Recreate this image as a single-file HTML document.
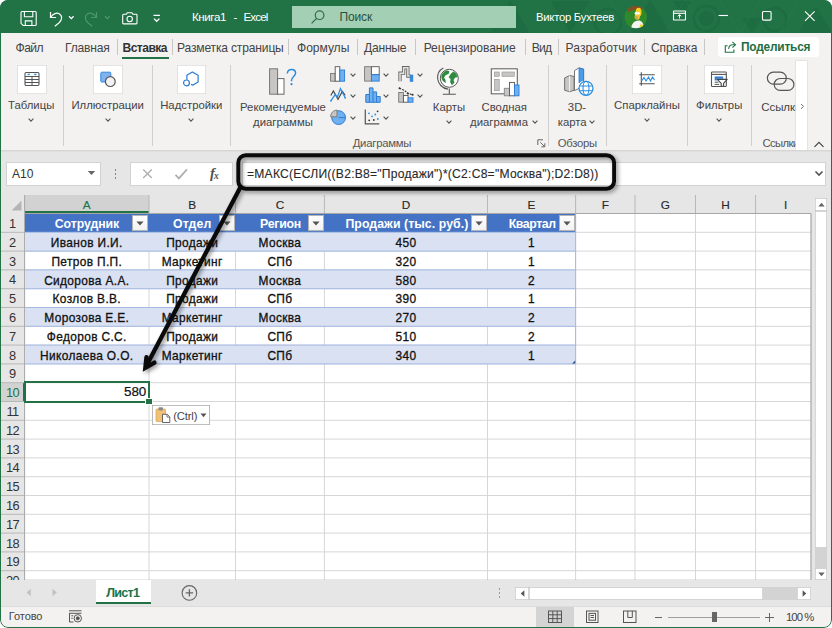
<!DOCTYPE html>
<html lang="ru"><head><meta charset="utf-8"><title>Excel</title>
<style>
html,body{margin:0;padding:0;background:#fff;}
body{width:832px;height:628px;position:relative;overflow:hidden;font-family:"Liberation Sans",sans-serif;}
.b{position:absolute;display:block;}
.t{position:absolute;white-space:nowrap;display:block;line-height:0;}
.s{display:inline-block;width:0;height:30px;}
</style></head><body>
<div class="b" style="left:0.00px;top:0.00px;width:832.00px;height:628.00px;background:#fff;"></div>
<div class="b" id="win" style="left:0;top:0;width:832px;height:628px;border-radius:8px;overflow:hidden;background:#e6e6e6">
<div class="b" style="left:0.00px;top:0.00px;width:832.00px;height:32.50px;background:#217346;"></div>
<svg class="b" style="left:480px;top:0" width="352" height="33" viewBox="0 0 352 33">
<g fill="#1e6c41">
<polygon points="10,33 30,0 50,33"/><polygon points="70,0 110,0 90,33"/><polygon points="150,33 170,0 190,33"/>
<polygon points="262,18 282,18 272,33"/><polygon points="318,33 336,6 352,33"/><polygon points="192,0 212,0 202,14"/>
<circle cx="226.500" cy="18.500" r="7.500"/>
</g>
<g fill="none" stroke="#1e6c41" stroke-width="2.500"><circle cx="226.500" cy="18.500" r="12.500"/><circle cx="294.700" cy="19.600" r="11.500"/><circle cx="128" cy="22" r="13"/></g>
<g fill="none" stroke="#2a7c50" stroke-width=".8" opacity=".7"><path d="M185 33l20-33 20 33M240 0l20 33 20-33M300 33l18-33M130 0l20 33"/></g>
</svg>
<div class="b" style="left:292.00px;top:6.00px;width:223.50px;height:22.00px;background:#a3cfb5;"></div>
<svg class="b" style="left:310px;top:9px" width="16" height="16" viewBox="0 0 16 16"><circle cx="9.6" cy="6.2" r="4.3" fill="none" stroke="#2f6f4c" stroke-width="1.2"/><path d="M6.6 9.4 L1.6 14.4" stroke="#2f6f4c" stroke-width="1.3" fill="none"/></svg>
<span class="t" style="left:339.50px;top:-9.10px;font-size:12px;color:#2b4f3b;font-weight:400;letter-spacing:-0.150px;"><i class="s"></i>Поиск</span>
<span class="t" style="left:192.00px;top:-9.20px;font-size:11.6px;color:#fff;font-weight:400;letter-spacing:-0.420px;"><i class="s"></i>Книга1</span>
<span class="t" style="left:233.50px;top:-9.20px;font-size:11.6px;color:#fff;font-weight:400;letter-spacing:0.137px;"><i class="s"></i>-</span>
<span class="t" style="left:243.50px;top:-9.20px;font-size:11.6px;color:#fff;font-weight:400;letter-spacing:-0.873px;"><i class="s"></i>Excel</span>
<span class="t" style="left:536.00px;top:-8.90px;font-size:11.3px;color:#fff;font-weight:400;letter-spacing:-0.260px;"><i class="s"></i>Виктор Бухтеев</span>
<svg class="b" style="left:624px;top:5px" width="24" height="24" viewBox="0 0 24 24">
<defs><clipPath id="av"><circle cx="11.800" cy="12.100" r="11.200"/></clipPath></defs>
<g clip-path="url(#av)"><rect width="24" height="24" fill="#2f8a2c"/>
<path d="M0 0h24v5.500c-4-2.200-14-2.200-20 1.500z" fill="#8a4b23"/>
<ellipse cx="14.600" cy="7.200" rx="2.900" ry="4.400" fill="#f6d11f"/>
<ellipse cx="13.300" cy="11.800" rx="2.600" ry="3" fill="#f0c62a"/>
<ellipse cx="12.300" cy="12.600" rx="1.800" ry="1.500" fill="#c9a45c"/>
<circle cx="12.200" cy="8.300" r="1.500" fill="#fff"/><circle cx="14.600" cy="8.200" r="1.300" fill="#fff"/>
<path d="M7 24c.5-5 3-8.500 7.500-8.500 3 0 5 2.500 5.200 6.500l-2 2z" fill="#f4f4f2"/>
<circle cx="17.500" cy="21" r="1.800" fill="#f6d11f"/>
</g></svg>
<svg class="b" style="left:660px;top:0" width="172" height="33" viewBox="0 0 172 33" fill="none" stroke="#fff" stroke-width="1.1">
<rect x="13.5" y="11" width="12" height="9" rx="0.5"/><path d="M13.5 13.3h12"/><path d="M19.5 18.5v-3.6M17.7 16.3l1.8-1.6 1.8 1.6" stroke-width="1"/>
<path d="M58.5 15.5h9.5"/>
<rect x="102.5" y="11.5" width="8.6" height="8.6" rx="1"/>
<path d="M145 11.3l9.6 9.6M154.6 11.3l-9.6 9.6"/>
</svg>
<svg class="b" style="left:16.500px;top:6.500px" width="150" height="22" viewBox="0 0 150 22" fill="none" stroke="#fff" stroke-width="1.1">
<path d="M5 4.5h13.2a1 1 0 0 1 1 1v12a1 1 0 0 1-1 1H6.2L4 16.3V5.5a1 1 0 0 1 1-1z"/>
<path d="M7.4 4.5v5.2h8.4V4.5M8.3 18.5v-4.6h6.6v4.6"/>
<path d="M33.5 5v5.5h5.5" stroke-width="1.2"/><path d="M33.8 10.3c2-3.6 6-5.2 8.8-3.2 3 2.200 2.400 6-0.500 8.600l-4.300 3.600" stroke-width="1.2"/>
<path d="M52 9.300l2.300 2.300 2.300-2.300" stroke-width="1.3"/>
<g stroke="#4f9470"><path d="M79.500 5v5.500h-5.500" stroke-width="1.200"/><path d="M79.200 10.300c-2-3.600-6-5.200-8.800-3.200-3 2.200-2.400 6 .5 8.600l4.300 3.600" stroke-width="1.2"/><path d="M88 9.300l2.300 2.300 2.300-2.300" stroke-width="1.300"/></g>
<path d="M106.500 7.300h2.800l1-1.600h4.600l1 1.600h3.300a.8.800 0 0 1 .8.800v8a.8.800 0 0 1-.8.800h-12.700a.8.800 0 0 1-.8-.8v-8a.8.800 0 0 1 .8-.8z"/><circle cx="112.700" cy="12" r="2.700"/>
<path d="M136.500 8.400h6.400" stroke-width="1.200"/><path d="M137 11.600l2.700 2.700 2.700-2.700" stroke-width="1.300"/>
</svg>
<div class="b" style="left:0.00px;top:32.50px;width:832.00px;height:117.50px;background:#f3f2f1;"></div>
<span class="t" style="left:15.50px;top:22.00px;font-size:12.1px;color:#444;font-weight:400;letter-spacing:-0.562px;"><i class="s"></i>Файл</span>
<span class="t" style="left:65.00px;top:22.00px;font-size:12.1px;color:#444;font-weight:400;letter-spacing:-0.222px;"><i class="s"></i>Главная</span>
<span class="t" style="left:122.50px;top:22.00px;font-size:12.1px;color:#333;font-weight:700;letter-spacing:-0.550px;"><i class="s"></i>Вставка</span>
<span class="t" style="left:177.00px;top:22.00px;font-size:12.1px;color:#444;font-weight:400;letter-spacing:-0.181px;"><i class="s"></i>Разметка страницы</span>
<span class="t" style="left:297.00px;top:22.00px;font-size:12.1px;color:#444;font-weight:400;letter-spacing:-0.051px;"><i class="s"></i>Формулы</span>
<span class="t" style="left:364.00px;top:22.00px;font-size:12.1px;color:#444;font-weight:400;letter-spacing:-0.236px;"><i class="s"></i>Данные</span>
<span class="t" style="left:423.70px;top:22.00px;font-size:12.1px;color:#444;font-weight:400;letter-spacing:-0.102px;"><i class="s"></i>Рецензирование</span>
<span class="t" style="left:531.70px;top:22.00px;font-size:12.1px;color:#444;font-weight:400;letter-spacing:-0.797px;"><i class="s"></i>Вид</span>
<span class="t" style="left:565.50px;top:22.00px;font-size:12.1px;color:#444;font-weight:400;letter-spacing:0.085px;"><i class="s"></i>Разработчик</span>
<span class="t" style="left:651.00px;top:22.00px;font-size:12.1px;color:#444;font-weight:400;letter-spacing:-0.167px;"><i class="s"></i>Справка</span>
<div class="b" style="left:116.50px;top:39.00px;width:1.00px;height:15.50px;background:#c8c6c4;"></div>
<div class="b" style="left:172.20px;top:39.00px;width:1.00px;height:15.50px;background:#c8c6c4;"></div>
<div class="b" style="left:288.20px;top:39.00px;width:1.00px;height:15.50px;background:#c8c6c4;"></div>
<div class="b" style="left:357.00px;top:39.00px;width:1.00px;height:15.50px;background:#c8c6c4;"></div>
<div class="b" style="left:415.00px;top:39.00px;width:1.00px;height:15.50px;background:#c8c6c4;"></div>
<div class="b" style="left:524.50px;top:39.00px;width:1.00px;height:15.50px;background:#c8c6c4;"></div>
<div class="b" style="left:557.80px;top:39.00px;width:1.00px;height:15.50px;background:#c8c6c4;"></div>
<div class="b" style="left:644.00px;top:39.00px;width:1.00px;height:15.50px;background:#c8c6c4;"></div>
<div class="b" style="left:704.00px;top:39.00px;width:1.00px;height:15.50px;background:#c8c6c4;"></div>
<div class="b" style="left:122.00px;top:57.00px;width:47.00px;height:2.30px;background:#217346;"></div>
<div class="b" style="left:718.00px;top:36.60px;width:101.00px;height:20.10px;background:#fff;border-radius:3px;"></div>
<svg class="b" style="left:723px;top:39px" width="16" height="16" viewBox="0 0 16 16" fill="none" stroke="#217346" stroke-width="1.1">
<path d="M4.600 6.800H2.300v6.400h8.600V10.400"/><path d="M9.400 2.800l3.100 2.900-3.100 2.900"/><path d="M12.300 5.700H9.600c-2.300 0-3.900 1.600-3.900 4.300"/></svg>
<span class="t" style="left:741.00px;top:21.20px;font-size:11.9px;color:#1e6e42;font-weight:700;letter-spacing:-0.202px;"><i class="s"></i>Поделиться</span>
<div class="b" style="left:63.00px;top:65.00px;width:1.00px;height:81.00px;background:#d2d0ce;"></div>
<div class="b" style="left:152.40px;top:65.00px;width:1.00px;height:81.00px;background:#d2d0ce;"></div>
<div class="b" style="left:229.90px;top:65.00px;width:1.00px;height:81.00px;background:#d2d0ce;"></div>
<div class="b" style="left:547.50px;top:65.00px;width:1.00px;height:81.00px;background:#d2d0ce;"></div>
<div class="b" style="left:606.00px;top:65.00px;width:1.00px;height:81.00px;background:#d2d0ce;"></div>
<div class="b" style="left:687.00px;top:65.00px;width:1.00px;height:81.00px;background:#d2d0ce;"></div>
<div class="b" style="left:750.50px;top:65.00px;width:1.00px;height:81.00px;background:#d2d0ce;"></div>
<div class="b" style="left:17.00px;top:65.00px;width:29.60px;height:28.60px;background:#fff;box-shadow:inset 0 0 0 0.8px #dddbd9;"></div>
<svg class="b" style="left:23.90px;top:70.500px;overflow:visible" width="16" height="16" viewBox="0 0 16 16" fill="none"><rect x="1" y="1.500" width="14" height="13" rx="1.200" stroke="#555" stroke-width="1.100"/><path d="M1 5.500h14M1 8.500h14M1 11.500h14M8 5.500v9" stroke="#555" stroke-width="1"/><path d="M3.500 3l1.200 1.200L5.900 3zM10.100 3l1.200 1.200L12.500 3z" fill="#1e8fe6" stroke="#1e8fe6" stroke-width=".5"/></svg>
<span class="t" style="left:8.03px;top:79.00px;font-size:11.35px;color:#444;font-weight:400;letter-spacing:0.000px;"><i class="s"></i>Таблицы</span>
<svg class="b" style="left:27.20px;top:116.50px" width="8" height="6" viewBox="0 0 8 6"><path d="M1.600 1.700L4 4.100 6.400 1.700" fill="none" stroke="#555" stroke-width="1.150"/></svg>
<div class="b" style="left:93.20px;top:65.00px;width:29.60px;height:28.60px;background:#fff;box-shadow:inset 0 0 0 0.8px #dddbd9;"></div>
<svg class="b" style="left:100.10px;top:70.500px;overflow:visible" width="16" height="16" viewBox="0 0 16 16" fill="none"><rect x=".8" y="1.200" width="10" height="9.800" rx="1" fill="#7db3ee" stroke="#3a86da" stroke-width="1"/><circle cx="10.300" cy="10.600" r="4.900" fill="#f3f3f3" stroke="#555" stroke-width="1.200"/></svg>
<span class="t" style="left:71.40px;top:79.00px;font-size:11.35px;color:#444;font-weight:400;letter-spacing:0.000px;"><i class="s"></i>Иллюстрации</span>
<svg class="b" style="left:103.70px;top:116.50px" width="8" height="6" viewBox="0 0 8 6"><path d="M1.600 1.700L4 4.100 6.400 1.700" fill="none" stroke="#555" stroke-width="1.150"/></svg>
<div class="b" style="left:176.50px;top:65.00px;width:29.60px;height:28.60px;background:#fff;box-shadow:inset 0 0 0 0.8px #dddbd9;"></div>
<svg class="b" style="left:183.40px;top:70.500px;overflow:visible" width="16" height="16" viewBox="0 0 16 16" fill="none"><path d="M3.900 8.800V4.300L9.300 .900 15.100 4.300V11L10.100 14.100 8 13.400" stroke="#2b7cd3" stroke-width="1.200" stroke-linejoin="round"/><circle cx="3.500" cy="11.900" r="2.900" stroke="#2b7cd3" stroke-width="1.200"/></svg>
<span class="t" style="left:160.16px;top:79.00px;font-size:11.35px;color:#444;font-weight:400;letter-spacing:0.000px;"><i class="s"></i>Надстройки</span>
<svg class="b" style="left:187.30px;top:116.50px" width="8" height="6" viewBox="0 0 8 6"><path d="M1.600 1.700L4 4.100 6.400 1.700" fill="none" stroke="#555" stroke-width="1.150"/></svg>
<div class="b" style="left:632.30px;top:65.00px;width:29.60px;height:28.60px;background:#fff;box-shadow:inset 0 0 0 0.8px #dddbd9;"></div>
<svg class="b" style="left:639.20px;top:70.500px;overflow:visible" width="16" height="16" viewBox="0 0 16 16" fill="none"><path d="M2.300 1.300v13.500M.2 3.800h15.600M.2 12.700h15.600" stroke="#555" stroke-width="1.100"/><path d="M3 9.500l2-3 2 3.500 2.500-4 2 4 2-4 2 3" stroke="#2b8de0" stroke-width="1.100"/></svg>
<span class="t" style="left:614.12px;top:79.00px;font-size:11.35px;color:#444;font-weight:400;letter-spacing:0.000px;"><i class="s"></i>Спарклайны</span>
<svg class="b" style="left:643.00px;top:116.50px" width="8" height="6" viewBox="0 0 8 6"><path d="M1.600 1.700L4 4.100 6.400 1.700" fill="none" stroke="#555" stroke-width="1.150"/></svg>
<div class="b" style="left:704.40px;top:65.00px;width:29.60px;height:28.60px;background:#fff;box-shadow:inset 0 0 0 0.8px #dddbd9;"></div>
<svg class="b" style="left:711.30px;top:70.500px;overflow:visible" width="16" height="16" viewBox="0 0 16 16" fill="none"><rect x=".5" y="1" width="14.800" height="14.500" rx=".8" stroke="#555" stroke-width="1.100"/><path d=".5 3.400" /><path d="M.5 3.400h14.800" stroke="#555" stroke-width="1.100"/><path d="M3.700 5.500h8.500v2.200H5.700v1.800h-2z" fill="#2b7cd3"/><path d="M3.700 11.200h3.600M3.700 13.400h4.500" stroke="#555" stroke-width="1"/><path d="M6.200 8.400h10l-3.600 4v2.800h-2.400v-2.800z" fill="#fff" stroke="#444" stroke-width="1.100" stroke-linejoin="round"/></svg>
<span class="t" style="left:696.06px;top:79.00px;font-size:11.35px;color:#444;font-weight:400;letter-spacing:0.000px;"><i class="s"></i>Фильтры</span>
<svg class="b" style="left:715.20px;top:116.50px" width="8" height="6" viewBox="0 0 8 6"><path d="M1.600 1.700L4 4.100 6.400 1.700" fill="none" stroke="#555" stroke-width="1.150"/></svg>
<svg class="b" style="left:268px;top:66px" width="32" height="32" viewBox="0 0 32 32" fill="none">
<rect x="1.600" y="2.800" width="8" height="25.400" fill="#c8c6c4" stroke="#777" stroke-width="1"/>
<rect x="9.600" y="12.600" width="6.400" height="15.600" fill="#fff" stroke="#666" stroke-width="1"/>
<path d="M19.300 7.500c.2-2.700 2-4.100 4.200-4.100 2.400 0 4.100 1.500 4.100 3.700 0 3.200-4.100 3.700-4.100 7.300v.8" stroke="#2b8de0" stroke-width="1.500"/><circle cx="23.500" cy="18.200" r="1.100" fill="#2b8de0"/></svg>
<span class="t" style="left:240.04px;top:81.20px;font-size:11.35px;color:#444;font-weight:400;letter-spacing:0.000px;"><i class="s"></i>Рекомендуемые</span>
<span class="t" style="left:253.10px;top:95.70px;font-size:11.35px;color:#444;font-weight:400;letter-spacing:0.000px;"><i class="s"></i>диаграммы</span>
<svg class="b" style="left:330.30px;top:66.40px" width="16" height="16" viewBox="0 0 16 16" fill="none"><rect x=".6" y="7.500" width="4.600" height="7.700" fill="#c8c6c4" stroke="#777" stroke-width=".9"/><rect x="5.200" y=".700" width="4.600" height="14.500" fill="#fff" stroke="#555" stroke-width=".9"/><rect x="9.800" y="4" width="4.800" height="11.200" fill="#6fb1f0" stroke="#2b7cd3" stroke-width=".9"/></svg>
<svg class="b" style="left:364.00px;top:66.40px" width="16" height="16" viewBox="0 0 16 16" fill="none"><rect x=".6" y=".700" width="6.800" height="14.400" fill="#c8c6c4" stroke="#777" stroke-width=".9"/><rect x="7.400" y=".700" width="7.800" height="8" fill="#fff" stroke="#555" stroke-width=".9"/><rect x="7.400" y="8.700" width="7.800" height="6.400" fill="#6fb1f0" stroke="#2b7cd3" stroke-width=".9"/></svg>
<svg class="b" style="left:397.80px;top:66.40px" width="16" height="16" viewBox="0 0 16 16" fill="none"><path d="M2 15.200V7.200H5.600V1.700H9.900V10.100H12.600" stroke="#666" stroke-width="3.300"/><path d="M2 15.800V7.200H5.600V1.700H9.900V10.100H12.600" stroke="#e4e4e4" stroke-width="1.500"/><rect x="12.200" y="9.100" width="2.600" height="6.200" fill="#2b8de0" stroke="#2b7cd3" stroke-width=".8"/></svg>
<svg class="b" style="left:330.30px;top:87.30px" width="16" height="16" viewBox="0 0 16 16" fill="none"><path d="M.8 8.600L3.400 4 8 12.300 12.300 4.400 15.200 8.400" stroke="#444" stroke-width="1.100"/><path d="M.8 13.800L5.200 7.600 7.400 10.200 10.400 1.600 15.200 10.800" stroke="#2b8de0" stroke-width="1.200"/><g fill="#2b8de0"><circle cx=".9" cy="13.800" r=".9"/><circle cx="15.200" cy="10.800" r=".9"/></g></svg>
<svg class="b" style="left:364.60px;top:87.30px" width="16" height="16" viewBox="0 0 16 16" fill="none"><path d="M.8 15.300V7.500h3.600V.9h3.600v4h3.600v4.600h3.600v5.800z" fill="#6fb1f0" stroke="#2b7cd3" stroke-width="1"/><path d="M4.400 7.500v7.800M8 4.900v10.400M11.600 9.500v5.800" stroke="#2b7cd3" stroke-width="1"/></svg>
<svg class="b" style="left:397.80px;top:87.30px" width="16" height="16" viewBox="0 0 16 16" fill="none"><rect x=".7" y="5.500" width="4.700" height="9.700" fill="#c8c6c4" stroke="#777" stroke-width=".9"/><rect x="5.400" y="8.500" width="4.700" height="6.700" fill="#fff" stroke="#555" stroke-width=".9"/><rect x="10.100" y="10.800" width="4.900" height="4.400" fill="#6fb1f0" stroke="#2b7cd3" stroke-width=".9"/><path d="M1.400 1.200l5 2.200 3.400 3 5 1.300" stroke="#333" stroke-width="1.100" stroke-dasharray="2 1"/><g fill="#333"><circle cx="1.500" cy="1.300" r="1"/><circle cx="9.800" cy="6.400" r="1"/><circle cx="14.600" cy="7.700" r="1"/></g></svg>
<svg class="b" style="left:330.30px;top:108.90px" width="16" height="16" viewBox="0 0 16 16" fill="none"><circle cx="8.600" cy="8.600" r="6.900" fill="#6fb1f0" stroke="#2b7cd3" stroke-width="1"/><path d="M7 1v6.800H.6A6.600 6.600 0 0 1 7 1z" fill="#c8c6c4" stroke="#777" stroke-width=".9"/><path d="M8.600 8.600H15.400" stroke="#2b7cd3" stroke-width=".9"/></svg>
<svg class="b" style="left:364.00px;top:108.90px" width="16" height="16" viewBox="0 0 16 16" fill="none"><path d="M1.300.6v14.200h14" stroke="#555" stroke-width="1.200"/><g fill="#2b8de0"><circle cx="5" cy="4.300" r=".9"/><circle cx="8" cy="7.300" r=".9"/><circle cx="11.300" cy="5.500" r=".9"/><circle cx="13.800" cy="10" r=".9"/></g><g fill="#333"><circle cx="13.600" cy="2.300" r=".9"/><circle cx="5.200" cy="11.300" r=".9"/><circle cx="9.800" cy="11" r=".9"/></g></svg>
<svg class="b" style="left:348.50px;top:71.50px" width="8" height="6" viewBox="0 0 8 6"><path d="M1.600 1.700L4 4.100 6.400 1.700" fill="none" stroke="#555" stroke-width="1.150"/></svg>
<svg class="b" style="left:348.50px;top:93.30px" width="8" height="6" viewBox="0 0 8 6"><path d="M1.600 1.700L4 4.100 6.400 1.700" fill="none" stroke="#555" stroke-width="1.150"/></svg>
<svg class="b" style="left:382.30px;top:71.50px" width="8" height="6" viewBox="0 0 8 6"><path d="M1.600 1.700L4 4.100 6.400 1.700" fill="none" stroke="#555" stroke-width="1.150"/></svg>
<svg class="b" style="left:382.30px;top:93.30px" width="8" height="6" viewBox="0 0 8 6"><path d="M1.600 1.700L4 4.100 6.400 1.700" fill="none" stroke="#555" stroke-width="1.150"/></svg>
<svg class="b" style="left:416.30px;top:71.50px" width="8" height="6" viewBox="0 0 8 6"><path d="M1.600 1.700L4 4.100 6.400 1.700" fill="none" stroke="#555" stroke-width="1.150"/></svg>
<svg class="b" style="left:416.30px;top:93.30px" width="8" height="6" viewBox="0 0 8 6"><path d="M1.600 1.700L4 4.100 6.400 1.700" fill="none" stroke="#555" stroke-width="1.150"/></svg>
<svg class="b" style="left:348.50px;top:114.60px" width="8" height="6" viewBox="0 0 8 6"><path d="M1.600 1.700L4 4.100 6.400 1.700" fill="none" stroke="#555" stroke-width="1.150"/></svg>
<svg class="b" style="left:382.30px;top:114.60px" width="8" height="6" viewBox="0 0 8 6"><path d="M1.600 1.700L4 4.100 6.400 1.700" fill="none" stroke="#555" stroke-width="1.150"/></svg>
<span class="t" style="left:352.70px;top:117.00px;font-size:11.3px;color:#555;font-weight:400;letter-spacing:-0.222px;"><i class="s"></i>Диаграммы</span>
<svg class="b" style="left:435px;top:66px" width="28" height="31" viewBox="0 0 28 31" fill="none">
<circle cx="14.300" cy="12.300" r="9" fill="#fff" stroke="#555" stroke-width="1"/>
<path d="M9.500 5.500c2-1.500 4-1 5 0l-1 2.500-3 1.200-1.500 2.500 1.500 2 .3 3.200c-2.500-.8-4.300-3.500-4.500-6 0-2 1.500-4 3.200-5.400zM16 7.500l2.500-2 3 2.300.8 3.400-2 .2-1.800 2.600 1 2.500-2.600 2.800-1.800-3.300.5-3-2-1.800z" fill="#2e8b3e"/>
<path d="M8.300 1.900C4.500 4 2.300 8 2.600 12.300c.4 5.500 4.600 10.100 10.400 10.800" stroke="#555" stroke-width="1.100"/>
<path d="M14.300 22.500v5.500M7.800 28.300h13" stroke="#555" stroke-width="1.100"/></svg>
<span class="t" style="left:432.83px;top:81.20px;font-size:11.35px;color:#444;font-weight:400;letter-spacing:0.000px;"><i class="s"></i>Карты</span>
<svg class="b" style="left:444.70px;top:118.50px" width="8" height="6" viewBox="0 0 8 6"><path d="M1.600 1.700L4 4.100 6.400 1.700" fill="none" stroke="#555" stroke-width="1.150"/></svg>
<svg class="b" style="left:489px;top:66px" width="33" height="32" viewBox="0 0 33 32" fill="none">
<rect x="2.300" y="2.800" width="26" height="25" fill="#fff" stroke="#666" stroke-width="1.100"/>
<rect x="5.600" y="6" width="4.600" height="4.300" fill="#c8c6c4" stroke="#999" stroke-width=".7"/><rect x="13" y="6" width="12.300" height="4.300" fill="#c8c6c4" stroke="#999" stroke-width=".7"/>
<rect x="5.600" y="13.300" width="4.600" height="11.400" fill="#c8c6c4" stroke="#999" stroke-width=".7"/>
<rect x="15.300" y="22.300" width="5.200" height="7.500" fill="#c8c6c4" stroke="#888" stroke-width=".9"/><rect x="20.500" y="16.400" width="5" height="13.400" fill="#fff" stroke="#555" stroke-width=".9"/><rect x="25.500" y="19" width="4.500" height="10.800" fill="#6fb1f0" stroke="#2b7cd3" stroke-width=".9"/></svg>
<span class="t" style="left:481.54px;top:81.20px;font-size:11.35px;color:#444;font-weight:400;letter-spacing:0.000px;"><i class="s"></i>Сводная</span>
<span class="t" style="left:470.02px;top:95.70px;font-size:11.35px;color:#444;font-weight:400;letter-spacing:0.000px;"><i class="s"></i>диаграмма</span>
<svg class="b" style="left:530.50px;top:119.00px" width="8" height="6" viewBox="0 0 8 6"><path d="M1.600 1.700L4 4.100 6.400 1.700" fill="none" stroke="#555" stroke-width="1.150"/></svg>
<svg class="b" style="left:537px;top:139px" width="9" height="9" viewBox="0 0 9 9" fill="none" stroke="#666" stroke-width="1"><path d="M.8 6V.8H6"/><path d="M3.300 3.300L7.600 7.600M7.800 4.300v3.500H4.300"/></svg>
<svg class="b" style="left:562px;top:66px" width="33" height="32" viewBox="0 0 33 32" fill="none">
<path d="M2.600 12l5-2.500 4.500 1v13.800l-4.500 1.400-5-1.400z" fill="#c8c6c4" stroke="#666" stroke-width=".9"/><path d="M7.600 9.600v16" stroke="#fff" stroke-width=".8"/>
<path d="M12.500 4.600l4.500-2.800 4.600 1.300v17l-9.100 4.500z" fill="#fff" stroke="#666" stroke-width=".9"/>
<path d="M17 2l4.600 1.200V14c-1.800.4-3.300 1.500-4.600 3z" fill="#4a9be8" stroke="#2b7cd3" stroke-width=".8"/>
<circle cx="24" cy="22.300" r="7" fill="#fff" stroke="#2b8de0" stroke-width="1.300"/><ellipse cx="24" cy="22.300" rx="3" ry="7" stroke="#2b8de0" stroke-width="1.100"/><path d="M17.300 20h13.400M17.300 24.800h13.400" stroke="#2b8de0" stroke-width="1.100"/></svg>
<span class="t" style="left:567.86px;top:81.20px;font-size:11.35px;color:#444;font-weight:400;letter-spacing:0.000px;"><i class="s"></i>3D-</span>
<span class="t" style="left:557.71px;top:95.70px;font-size:11.35px;color:#444;font-weight:400;letter-spacing:0.000px;"><i class="s"></i>карта</span>
<svg class="b" style="left:587.50px;top:119.00px" width="8" height="6" viewBox="0 0 8 6"><path d="M1.600 1.700L4 4.100 6.400 1.700" fill="none" stroke="#555" stroke-width="1.150"/></svg>
<span class="t" style="left:557.70px;top:117.00px;font-size:11.3px;color:#555;font-weight:400;letter-spacing:-0.243px;"><i class="s"></i>Обзоры</span>
<svg class="b" style="left:765px;top:70px" width="30" height="22" viewBox="0 0 30 22" fill="none" stroke="#555" stroke-width="1.200">
<rect x="2.400" y="2.100" width="18.900" height="12.100" rx="6"/><rect x="9.200" y="8.500" width="19.700" height="11.800" rx="5.900"/></svg>
<div class="b" style="left:755px;top:95px;width:40.5px;height:56px;overflow:hidden"><span class="t" style="left:6.30px;top:-14.30px;font-size:11.5px;color:#444;font-weight:400;letter-spacing:-0.081px;"><i class="s"></i>Ссылки</span><span class="t" style="left:7.40px;top:22.00px;font-size:11.3px;color:#555;font-weight:400;letter-spacing:-0.630px;"><i class="s"></i>Ссылки</span></div>
<div class="b" style="left:795.50px;top:61.40px;width:11.50px;height:89.20px;background:#fff;box-shadow:0 0 0 0.6px #dcdad8;"></div>
<svg class="b" style="left:797.500px;top:102px" width="8" height="9" viewBox="0 0 8 9"><path d="M3 2L5.500 4.400 3 6.800" fill="none" stroke="#777" stroke-width="1"/></svg>
<svg class="b" style="left:812.500px;top:140px" width="12" height="9" viewBox="0 0 12 9"><path d="M1.500 6.800L6 2.300l4.500 4.500" fill="none" stroke="#444" stroke-width="1.200"/></svg>
<div class="b" style="left:0.00px;top:150.00px;width:832.00px;height:45.00px;background:#e6e6e6;box-shadow:inset 0 2px 2px -1px #cfcfcf;"></div>
<div class="b" style="left:6.00px;top:161.70px;width:95.00px;height:24.00px;background:#fff;box-shadow:inset 0 0 0 1px #d2d2d2;"></div>
<span class="t" style="left:12.00px;top:148.20px;font-size:12px;color:#333;font-weight:400;letter-spacing:0.049px;"><i class="s"></i>A10</span>
<svg class="b" style="left:87px;top:170px" width="9" height="6" viewBox="0 0 9 6"><path d="M.8.900h7.400L4.500 5z" fill="#666"/></svg>
<div class="b" style="left:114.60px;top:169.30px;width:1.80px;height:1.80px;background:#858585;"></div>
<div class="b" style="left:114.60px;top:173.30px;width:1.80px;height:1.80px;background:#858585;"></div>
<div class="b" style="left:114.60px;top:177.30px;width:1.80px;height:1.80px;background:#858585;"></div>
<div class="b" style="left:129.60px;top:161.70px;width:103.10px;height:24.00px;background:#fff;box-shadow:inset 0 0 0 1px #d2d2d2;"></div>
<svg class="b" style="left:140px;top:165px" width="86" height="18" viewBox="0 0 86 18" fill="none" stroke="#b0b0b0" stroke-width="1.400">
<path d="M3.200 4.500l8.600 8.600M11.800 4.500L3.200 13.100"/><path d="M35.500 9.800l3.400 3.600L47 4.300" stroke-width="1.800"/></svg>
<span class="t" style="left:210px;top:165.500px;font-family:'Liberation Serif',serif;font-style:italic;font-weight:700;font-size:14.5px;line-height:15px;color:#505050;letter-spacing:-.8px">f<span style="font-size:9.5px;position:relative;top:1.500px">x</span></span>
<div class="b" style="left:242.00px;top:161.70px;width:584.00px;height:24.00px;background:#fff;box-shadow:inset 0 0 0 1px #d2d2d2;"></div>
<span class="t" style="left:247.00px;top:148.30px;font-size:12.1px;color:#2a2a2a;font-weight:400;letter-spacing:0.243px;-webkit-text-stroke:0.12px #2a2a2a;"><i class="s"></i>=МАКС(ЕСЛИ((B2:B8="Продажи")*(C2:C8="Москва");D2:D8))</span>
<svg class="b" style="left:813.500px;top:170px" width="10" height="7" viewBox="0 0 10 7"><path d="M1.500 1.500L5 5l3.500-3.500" fill="none" stroke="#555" stroke-width="1.700"/></svg>
<div class="b" style="left:0.00px;top:195.00px;width:832.00px;height:385.40px;background:#e6e6e6;"></div>
<div class="b" style="left:24.60px;top:213.50px;width:786.40px;height:366.90px;background:#fff;"></div>
<div class="b" style="left:24.60px;top:195.00px;width:124.40px;height:18.50px;background:#d2d2d2;"></div>
<div class="b" style="left:24.60px;top:211.40px;width:124.40px;height:2.00px;background:#217346;"></div>
<svg class="b" style="left:10px;top:199px" width="13" height="13" viewBox="0 0 13 13"><path d="M11.500 1.500v10H1.500z" fill="#b5b5b5"/></svg>
<span class="t" style="left:82.86px;top:178.60px;font-size:11.8px;color:#217346;font-weight:400;letter-spacing:0.000px;-webkit-text-stroke:0.12px #217346;"><i class="s"></i>A</span>
<span class="t" style="left:188.31px;top:178.60px;font-size:11.8px;color:#262626;font-weight:400;letter-spacing:0.000px;-webkit-text-stroke:0.12px #262626;"><i class="s"></i>B</span>
<span class="t" style="left:275.69px;top:178.60px;font-size:11.8px;color:#262626;font-weight:400;letter-spacing:0.000px;-webkit-text-stroke:0.12px #262626;"><i class="s"></i>C</span>
<span class="t" style="left:401.69px;top:178.60px;font-size:11.8px;color:#262626;font-weight:400;letter-spacing:0.000px;-webkit-text-stroke:0.12px #262626;"><i class="s"></i>D</span>
<span class="t" style="left:527.61px;top:178.60px;font-size:11.8px;color:#262626;font-weight:400;letter-spacing:0.000px;-webkit-text-stroke:0.12px #262626;"><i class="s"></i>E</span>
<span class="t" style="left:601.70px;top:178.60px;font-size:11.8px;color:#262626;font-weight:400;letter-spacing:0.000px;-webkit-text-stroke:0.12px #262626;"><i class="s"></i>F</span>
<span class="t" style="left:660.66px;top:178.60px;font-size:11.8px;color:#262626;font-weight:400;letter-spacing:0.000px;-webkit-text-stroke:0.12px #262626;"><i class="s"></i>G</span>
<span class="t" style="left:721.29px;top:178.60px;font-size:11.8px;color:#262626;font-weight:400;letter-spacing:0.000px;-webkit-text-stroke:0.12px #262626;"><i class="s"></i>H</span>
<span class="t" style="left:783.96px;top:178.60px;font-size:11.8px;color:#262626;font-weight:400;letter-spacing:0.000px;-webkit-text-stroke:0.12px #262626;"><i class="s"></i>I</span>
<div class="b" style="left:1.00px;top:382.70px;width:23.60px;height:18.80px;background:#d2d2d2;"></div>
<div class="b" style="left:23.00px;top:382.70px;width:1.80px;height:18.80px;background:#217346;"></div>
<span class="t" style="left:9.04px;top:198.00px;font-size:12.8px;color:#333;font-weight:400;letter-spacing:0.000px;"><i class="s"></i>1</span>
<span class="t" style="left:9.04px;top:216.80px;font-size:12.8px;color:#333;font-weight:400;letter-spacing:0.000px;"><i class="s"></i>2</span>
<span class="t" style="left:9.04px;top:235.60px;font-size:12.8px;color:#333;font-weight:400;letter-spacing:0.000px;"><i class="s"></i>3</span>
<span class="t" style="left:9.04px;top:254.40px;font-size:12.8px;color:#333;font-weight:400;letter-spacing:0.000px;"><i class="s"></i>4</span>
<span class="t" style="left:9.04px;top:273.20px;font-size:12.8px;color:#333;font-weight:400;letter-spacing:0.000px;"><i class="s"></i>5</span>
<span class="t" style="left:9.04px;top:292.00px;font-size:12.8px;color:#333;font-weight:400;letter-spacing:0.000px;"><i class="s"></i>6</span>
<span class="t" style="left:9.04px;top:310.80px;font-size:12.8px;color:#333;font-weight:400;letter-spacing:0.000px;"><i class="s"></i>7</span>
<span class="t" style="left:9.04px;top:329.60px;font-size:12.8px;color:#333;font-weight:400;letter-spacing:0.000px;"><i class="s"></i>8</span>
<span class="t" style="left:9.04px;top:348.40px;font-size:12.8px;color:#333;font-weight:400;letter-spacing:0.000px;"><i class="s"></i>9</span>
<span class="t" style="left:5.93px;top:367.20px;font-size:12.8px;color:#217346;font-weight:400;letter-spacing:-0.450px;"><i class="s"></i>10</span>
<span class="t" style="left:6.41px;top:386.00px;font-size:12.8px;color:#333;font-weight:400;letter-spacing:-0.450px;"><i class="s"></i>11</span>
<span class="t" style="left:5.93px;top:404.80px;font-size:12.8px;color:#333;font-weight:400;letter-spacing:-0.450px;"><i class="s"></i>12</span>
<span class="t" style="left:5.93px;top:423.60px;font-size:12.8px;color:#333;font-weight:400;letter-spacing:-0.450px;"><i class="s"></i>13</span>
<span class="t" style="left:5.93px;top:442.40px;font-size:12.8px;color:#333;font-weight:400;letter-spacing:-0.450px;"><i class="s"></i>14</span>
<span class="t" style="left:5.93px;top:461.20px;font-size:12.8px;color:#333;font-weight:400;letter-spacing:-0.450px;"><i class="s"></i>15</span>
<span class="t" style="left:5.93px;top:480.00px;font-size:12.8px;color:#333;font-weight:400;letter-spacing:-0.450px;"><i class="s"></i>16</span>
<span class="t" style="left:5.93px;top:498.80px;font-size:12.8px;color:#333;font-weight:400;letter-spacing:-0.450px;"><i class="s"></i>17</span>
<span class="t" style="left:5.93px;top:517.60px;font-size:12.8px;color:#333;font-weight:400;letter-spacing:-0.450px;"><i class="s"></i>18</span>
<span class="t" style="left:5.93px;top:536.40px;font-size:12.8px;color:#333;font-weight:400;letter-spacing:-0.450px;"><i class="s"></i>19</span>
<span class="t" style="left:5.93px;top:555.20px;font-size:12.8px;color:#333;font-weight:400;letter-spacing:-0.450px;"><i class="s"></i>20</span>
<svg class="b" style="left:0;top:195px" width="832" height="385.40" viewBox="0 195 832 385.40" fill="none"><path d="M149 195V213.500" stroke="#b8b8b8" stroke-width="1"/><path d="M235.5 195V213.500" stroke="#b8b8b8" stroke-width="1"/><path d="M324.4 195V213.500" stroke="#b8b8b8" stroke-width="1"/><path d="M487.5 195V213.500" stroke="#b8b8b8" stroke-width="1"/><path d="M575.6 195V213.500" stroke="#b8b8b8" stroke-width="1"/><path d="M635 195V213.500" stroke="#b8b8b8" stroke-width="1"/><path d="M695.5 195V213.500" stroke="#b8b8b8" stroke-width="1"/><path d="M755.6 195V213.500" stroke="#b8b8b8" stroke-width="1"/><path d="M1 232.30H24.600" stroke="#b8b8b8" stroke-width="1"/><path d="M1 251.10H24.600" stroke="#b8b8b8" stroke-width="1"/><path d="M1 269.90H24.600" stroke="#b8b8b8" stroke-width="1"/><path d="M1 288.70H24.600" stroke="#b8b8b8" stroke-width="1"/><path d="M1 307.50H24.600" stroke="#b8b8b8" stroke-width="1"/><path d="M1 326.30H24.600" stroke="#b8b8b8" stroke-width="1"/><path d="M1 345.10H24.600" stroke="#b8b8b8" stroke-width="1"/><path d="M1 363.90H24.600" stroke="#b8b8b8" stroke-width="1"/><path d="M1 382.70H24.600" stroke="#b8b8b8" stroke-width="1"/><path d="M1 401.50H24.600" stroke="#b8b8b8" stroke-width="1"/><path d="M1 420.30H24.600" stroke="#b8b8b8" stroke-width="1"/><path d="M1 439.10H24.600" stroke="#b8b8b8" stroke-width="1"/><path d="M1 457.90H24.600" stroke="#b8b8b8" stroke-width="1"/><path d="M1 476.70H24.600" stroke="#b8b8b8" stroke-width="1"/><path d="M1 495.50H24.600" stroke="#b8b8b8" stroke-width="1"/><path d="M1 514.30H24.600" stroke="#b8b8b8" stroke-width="1"/><path d="M1 533.10H24.600" stroke="#b8b8b8" stroke-width="1"/><path d="M1 551.90H24.600" stroke="#b8b8b8" stroke-width="1"/><path d="M1 570.70H24.600" stroke="#b8b8b8" stroke-width="1"/><path d="M24.600 213.500H811M24.600 195V580.4" stroke="#a6a6a6" stroke-width="1"/><path d="M149 214V580.4" stroke="#d6d6d6" stroke-width="1"/><path d="M235.5 214V580.4" stroke="#d6d6d6" stroke-width="1"/><path d="M324.4 214V580.4" stroke="#d6d6d6" stroke-width="1"/><path d="M487.5 214V580.4" stroke="#d6d6d6" stroke-width="1"/><path d="M575.6 214V580.4" stroke="#d6d6d6" stroke-width="1"/><path d="M635 214V580.4" stroke="#d6d6d6" stroke-width="1"/><path d="M695.5 214V580.4" stroke="#d6d6d6" stroke-width="1"/><path d="M755.6 214V580.4" stroke="#d6d6d6" stroke-width="1"/><path d="M25 232.30H811" stroke="#d6d6d6" stroke-width="1"/><path d="M25 251.10H811" stroke="#d6d6d6" stroke-width="1"/><path d="M25 269.90H811" stroke="#d6d6d6" stroke-width="1"/><path d="M25 288.70H811" stroke="#d6d6d6" stroke-width="1"/><path d="M25 307.50H811" stroke="#d6d6d6" stroke-width="1"/><path d="M25 326.30H811" stroke="#d6d6d6" stroke-width="1"/><path d="M25 345.10H811" stroke="#d6d6d6" stroke-width="1"/><path d="M25 363.90H811" stroke="#d6d6d6" stroke-width="1"/><path d="M25 382.70H811" stroke="#d6d6d6" stroke-width="1"/><path d="M25 401.50H811" stroke="#d6d6d6" stroke-width="1"/><path d="M25 420.30H811" stroke="#d6d6d6" stroke-width="1"/><path d="M25 439.10H811" stroke="#d6d6d6" stroke-width="1"/><path d="M25 457.90H811" stroke="#d6d6d6" stroke-width="1"/><path d="M25 476.70H811" stroke="#d6d6d6" stroke-width="1"/><path d="M25 495.50H811" stroke="#d6d6d6" stroke-width="1"/><path d="M25 514.30H811" stroke="#d6d6d6" stroke-width="1"/><path d="M25 533.10H811" stroke="#d6d6d6" stroke-width="1"/><path d="M25 551.90H811" stroke="#d6d6d6" stroke-width="1"/><path d="M25 570.70H811" stroke="#d6d6d6" stroke-width="1"/><path d="M811 213.500V580.4M24.600 580.4H811" stroke="#a6a6a6" stroke-width="1.200"/></svg>
<div class="b" style="left:24.60px;top:213.50px;width:551.00px;height:18.80px;background:#4472c4;"></div>
<div class="b" style="left:24.60px;top:232.30px;width:551.00px;height:18.80px;background:#d9e1f2;"></div>
<div class="b" style="left:24.60px;top:269.90px;width:551.00px;height:18.80px;background:#d9e1f2;"></div>
<div class="b" style="left:24.60px;top:307.50px;width:551.00px;height:18.80px;background:#d9e1f2;"></div>
<div class="b" style="left:24.60px;top:345.10px;width:551.00px;height:18.80px;background:#d9e1f2;"></div>
<svg class="b" style="left:0;top:195px" width="832" height="385.40" viewBox="0 195 832 385.40" fill="none"><path d="M25 232.30H575.600" stroke="#a4b9e3" stroke-width="1"/><path d="M25 251.10H575.600" stroke="#a4b9e3" stroke-width="1"/><path d="M25 269.90H575.600" stroke="#a4b9e3" stroke-width="1"/><path d="M25 288.70H575.600" stroke="#a4b9e3" stroke-width="1"/><path d="M25 307.50H575.600" stroke="#a4b9e3" stroke-width="1"/><path d="M25 326.30H575.600" stroke="#a4b9e3" stroke-width="1"/><path d="M25 345.10H575.600" stroke="#a4b9e3" stroke-width="1"/><path d="M25 363.90H575.600" stroke="#a4b9e3" stroke-width="1"/><path d="M575.600 213.50V363.90" stroke="#a4b9e3" stroke-width="1"/><path d="M575.200 360.40v3.100h-3.100z" fill="#2f5597"/></svg>
<span class="t" style="left:54.80px;top:197.70px;font-size:12.3px;color:#fff;font-weight:700;letter-spacing:-0.061px;"><i class="s"></i>Сотрудник</span>
<div class="b" style="left:132.40px;top:214.80px;width:15.80px;height:16.00px;background:linear-gradient(#fff,#f1f1f1);box-shadow:inset 0 0 0 1px #b4b4b4;"></div>
<svg class="b" style="left:136.30px;top:220.70px" width="8" height="5" viewBox="0 0 8 5"><path d="M.4.500h7.200L4 4.500z" fill="#555"/></svg>
<span class="t" style="left:173.00px;top:197.70px;font-size:12.3px;color:#fff;font-weight:700;letter-spacing:0.082px;"><i class="s"></i>Отдел</span>
<div class="b" style="left:218.90px;top:214.80px;width:15.80px;height:16.00px;background:linear-gradient(#fff,#f1f1f1);box-shadow:inset 0 0 0 1px #b4b4b4;"></div>
<svg class="b" style="left:222.80px;top:220.70px" width="8" height="5" viewBox="0 0 8 5"><path d="M.4.500h7.200L4 4.500z" fill="#555"/></svg>
<span class="t" style="left:260.00px;top:197.70px;font-size:12.3px;color:#fff;font-weight:700;letter-spacing:-0.228px;"><i class="s"></i>Регион</span>
<div class="b" style="left:307.80px;top:214.80px;width:15.80px;height:16.00px;background:linear-gradient(#fff,#f1f1f1);box-shadow:inset 0 0 0 1px #b4b4b4;"></div>
<svg class="b" style="left:311.70px;top:220.70px" width="8" height="5" viewBox="0 0 8 5"><path d="M.4.500h7.200L4 4.500z" fill="#555"/></svg>
<span class="t" style="left:345.40px;top:197.70px;font-size:12.3px;color:#fff;font-weight:700;letter-spacing:0.071px;"><i class="s"></i>Продажи (тыс. руб.)</span>
<div class="b" style="left:470.90px;top:214.80px;width:15.80px;height:16.00px;background:linear-gradient(#fff,#f1f1f1);box-shadow:inset 0 0 0 1px #b4b4b4;"></div>
<svg class="b" style="left:474.80px;top:220.70px" width="8" height="5" viewBox="0 0 8 5"><path d="M.4.500h7.200L4 4.500z" fill="#555"/></svg>
<span class="t" style="left:508.70px;top:197.70px;font-size:12.3px;color:#fff;font-weight:700;letter-spacing:-0.397px;"><i class="s"></i>Квартал</span>
<div class="b" style="left:559.00px;top:214.80px;width:15.80px;height:16.00px;background:linear-gradient(#fff,#f1f1f1);box-shadow:inset 0 0 0 1px #b4b4b4;"></div>
<svg class="b" style="left:562.90px;top:220.70px" width="8" height="5" viewBox="0 0 8 5"><path d="M.4.500h7.200L4 4.500z" fill="#555"/></svg>
<span class="t" style="left:50.87px;top:217.00px;font-size:11.9px;color:#111;font-weight:400;letter-spacing:0.360px;-webkit-text-stroke:0.3px #111;"><i class="s"></i>Иванов И.И.</span>
<span class="t" style="left:166.14px;top:217.00px;font-size:11.9px;color:#111;font-weight:400;letter-spacing:0.360px;-webkit-text-stroke:0.3px #111;"><i class="s"></i>Продажи</span>
<span class="t" style="left:258.56px;top:217.00px;font-size:11.9px;color:#111;font-weight:400;letter-spacing:0.360px;-webkit-text-stroke:0.3px #111;"><i class="s"></i>Москва</span>
<span class="t" style="left:395.48px;top:217.00px;font-size:11.9px;color:#111;font-weight:400;letter-spacing:0.360px;-webkit-text-stroke:0.3px #111;"><i class="s"></i>450</span>
<span class="t" style="left:528.06px;top:217.00px;font-size:11.9px;color:#111;font-weight:400;letter-spacing:0.360px;-webkit-text-stroke:0.3px #111;"><i class="s"></i>1</span>
<span class="t" style="left:51.42px;top:235.80px;font-size:11.9px;color:#111;font-weight:400;letter-spacing:0.360px;-webkit-text-stroke:0.3px #111;"><i class="s"></i>Петров П.П.</span>
<span class="t" style="left:161.70px;top:235.80px;font-size:11.9px;color:#111;font-weight:400;letter-spacing:0.360px;-webkit-text-stroke:0.3px #111;"><i class="s"></i>Маркетинг</span>
<span class="t" style="left:267.43px;top:235.80px;font-size:11.9px;color:#111;font-weight:400;letter-spacing:0.360px;-webkit-text-stroke:0.3px #111;"><i class="s"></i>СПб</span>
<span class="t" style="left:395.48px;top:235.80px;font-size:11.9px;color:#111;font-weight:400;letter-spacing:0.360px;-webkit-text-stroke:0.3px #111;"><i class="s"></i>320</span>
<span class="t" style="left:528.06px;top:235.80px;font-size:11.9px;color:#111;font-weight:400;letter-spacing:0.360px;-webkit-text-stroke:0.3px #111;"><i class="s"></i>1</span>
<span class="t" style="left:44.14px;top:254.60px;font-size:11.9px;color:#111;font-weight:400;letter-spacing:0.360px;-webkit-text-stroke:0.3px #111;"><i class="s"></i>Сидорова А.А.</span>
<span class="t" style="left:166.14px;top:254.60px;font-size:11.9px;color:#111;font-weight:400;letter-spacing:0.360px;-webkit-text-stroke:0.3px #111;"><i class="s"></i>Продажи</span>
<span class="t" style="left:258.56px;top:254.60px;font-size:11.9px;color:#111;font-weight:400;letter-spacing:0.360px;-webkit-text-stroke:0.3px #111;"><i class="s"></i>Москва</span>
<span class="t" style="left:395.48px;top:254.60px;font-size:11.9px;color:#111;font-weight:400;letter-spacing:0.360px;-webkit-text-stroke:0.3px #111;"><i class="s"></i>580</span>
<span class="t" style="left:528.06px;top:254.60px;font-size:11.9px;color:#111;font-weight:400;letter-spacing:0.360px;-webkit-text-stroke:0.3px #111;"><i class="s"></i>2</span>
<span class="t" style="left:52.55px;top:273.40px;font-size:11.9px;color:#111;font-weight:400;letter-spacing:0.360px;-webkit-text-stroke:0.3px #111;"><i class="s"></i>Козлов В.В.</span>
<span class="t" style="left:166.14px;top:273.40px;font-size:11.9px;color:#111;font-weight:400;letter-spacing:0.360px;-webkit-text-stroke:0.3px #111;"><i class="s"></i>Продажи</span>
<span class="t" style="left:267.43px;top:273.40px;font-size:11.9px;color:#111;font-weight:400;letter-spacing:0.360px;-webkit-text-stroke:0.3px #111;"><i class="s"></i>СПб</span>
<span class="t" style="left:395.48px;top:273.40px;font-size:11.9px;color:#111;font-weight:400;letter-spacing:0.360px;-webkit-text-stroke:0.3px #111;"><i class="s"></i>390</span>
<span class="t" style="left:528.06px;top:273.40px;font-size:11.9px;color:#111;font-weight:400;letter-spacing:0.360px;-webkit-text-stroke:0.3px #111;"><i class="s"></i>1</span>
<span class="t" style="left:44.31px;top:292.20px;font-size:11.9px;color:#111;font-weight:400;letter-spacing:0.360px;-webkit-text-stroke:0.3px #111;"><i class="s"></i>Морозова Е.Е.</span>
<span class="t" style="left:161.70px;top:292.20px;font-size:11.9px;color:#111;font-weight:400;letter-spacing:0.360px;-webkit-text-stroke:0.3px #111;"><i class="s"></i>Маркетинг</span>
<span class="t" style="left:258.56px;top:292.20px;font-size:11.9px;color:#111;font-weight:400;letter-spacing:0.360px;-webkit-text-stroke:0.3px #111;"><i class="s"></i>Москва</span>
<span class="t" style="left:395.48px;top:292.20px;font-size:11.9px;color:#111;font-weight:400;letter-spacing:0.360px;-webkit-text-stroke:0.3px #111;"><i class="s"></i>270</span>
<span class="t" style="left:528.06px;top:292.20px;font-size:11.9px;color:#111;font-weight:400;letter-spacing:0.360px;-webkit-text-stroke:0.3px #111;"><i class="s"></i>2</span>
<span class="t" style="left:46.82px;top:311.00px;font-size:11.9px;color:#111;font-weight:400;letter-spacing:0.360px;-webkit-text-stroke:0.3px #111;"><i class="s"></i>Федоров С.С.</span>
<span class="t" style="left:166.14px;top:311.00px;font-size:11.9px;color:#111;font-weight:400;letter-spacing:0.360px;-webkit-text-stroke:0.3px #111;"><i class="s"></i>Продажи</span>
<span class="t" style="left:267.43px;top:311.00px;font-size:11.9px;color:#111;font-weight:400;letter-spacing:0.360px;-webkit-text-stroke:0.3px #111;"><i class="s"></i>СПб</span>
<span class="t" style="left:395.48px;top:311.00px;font-size:11.9px;color:#111;font-weight:400;letter-spacing:0.360px;-webkit-text-stroke:0.3px #111;"><i class="s"></i>510</span>
<span class="t" style="left:528.06px;top:311.00px;font-size:11.9px;color:#111;font-weight:400;letter-spacing:0.360px;-webkit-text-stroke:0.3px #111;"><i class="s"></i>2</span>
<span class="t" style="left:40.10px;top:329.80px;font-size:11.9px;color:#111;font-weight:400;letter-spacing:0.360px;-webkit-text-stroke:0.3px #111;"><i class="s"></i>Николаева О.О.</span>
<span class="t" style="left:161.70px;top:329.80px;font-size:11.9px;color:#111;font-weight:400;letter-spacing:0.360px;-webkit-text-stroke:0.3px #111;"><i class="s"></i>Маркетинг</span>
<span class="t" style="left:267.43px;top:329.80px;font-size:11.9px;color:#111;font-weight:400;letter-spacing:0.360px;-webkit-text-stroke:0.3px #111;"><i class="s"></i>СПб</span>
<span class="t" style="left:395.48px;top:329.80px;font-size:11.9px;color:#111;font-weight:400;letter-spacing:0.360px;-webkit-text-stroke:0.3px #111;"><i class="s"></i>340</span>
<span class="t" style="left:528.06px;top:329.80px;font-size:11.9px;color:#111;font-weight:400;letter-spacing:0.360px;-webkit-text-stroke:0.3px #111;"><i class="s"></i>1</span>
<div class="b" style="left:23.80px;top:381.20px;width:126.40px;height:21.60px;border:2px solid #217346;box-sizing:border-box;"></div>
<div class="b" style="left:146.20px;top:398.70px;width:5.60px;height:5.60px;background:#217346;box-shadow:0 0 0 1px #fff;"></div>
<span class="t" style="left:123.94px;top:366.30px;font-size:13.4px;color:#111;font-weight:400;letter-spacing:0.000px;-webkit-text-stroke:0.2px #111;"><i class="s"></i>580</span>
<div class="b" style="left:152.00px;top:404.80px;width:57.60px;height:20.50px;background:#fff;box-shadow:inset 0 0 0 0.8px #ababab;"></div>
<svg class="b" style="left:155px;top:406px" width="17" height="18" viewBox="0 0 17 18" fill="none">
<rect x="1" y="3" width="9.500" height="12.600" rx="1" fill="#f0c177" stroke="#d9a75a" stroke-width=".8"/><rect x="3.500" y="1.200" width="4.500" height="3.200" rx=".8" fill="#8a8a8a"/>
<path d="M7.500 8.300h4.700l2.600 2.600v5.600H7.500z" fill="#fff" stroke="#555" stroke-width=".9"/><path d="M12 8.500v2.600h2.600" stroke="#555" stroke-width=".8"/></svg>
<span class="t" style="left:173.20px;top:389.70px;font-size:11.3px;color:#444;font-weight:400;letter-spacing:-0.167px;"><i class="s"></i>(Ctrl)</span>
<svg class="b" style="left:200px;top:413px" width="7" height="5" viewBox="0 0 7 5"><path d="M.5.600h6L3.500 4.200z" fill="#555"/></svg>
<div class="b" style="left:814.80px;top:197.70px;width:12.60px;height:13.00px;background:#fff;box-shadow:inset 0 0 0 0.7px #c6c6c6;"></div>
<svg class="b" style="left:817.600px;top:201.500px" width="7" height="5" viewBox="0 0 7 5"><path d="M.3 4.400h6.400L3.500.700z" fill="#666"/></svg>
<div class="b" style="left:814.80px;top:210.70px;width:12.60px;height:356.90px;background:#d3d3d3;"></div>
<div class="b" style="left:814.80px;top:210.70px;width:12.60px;height:337.70px;background:#fff;box-shadow:inset 0 0 0 0.7px #c6c6c6;"></div>
<div class="b" style="left:814.80px;top:567.60px;width:12.60px;height:12.90px;background:#fff;box-shadow:inset 0 0 0 0.7px #c6c6c6;"></div>
<svg class="b" style="left:817.600px;top:572px" width="7" height="5" viewBox="0 0 7 5"><path d="M.3.600h6.400L3.500 4.300z" fill="#666"/></svg>
<div class="b" style="left:0.00px;top:580.40px;width:832.00px;height:25.90px;background:#e6e6e6;"></div>
<div class="b" style="left:95.50px;top:579.90px;width:55.30px;height:23.50px;background:#fff;"></div>
<div class="b" style="left:95.50px;top:601.60px;width:55.30px;height:2.00px;background:#217346;"></div>
<span class="t" style="left:106.20px;top:567.00px;font-size:12.6px;color:#217346;font-weight:700;letter-spacing:-0.755px;"><i class="s"></i>Лист1</span>
<svg class="b" style="left:24px;top:587px" width="36" height="11" viewBox="0 0 36 11"><path d="M6.800 1.800v7.400L2.500 5.500zM28.500 1.800v7.400l4.300-3.700z" fill="#c2c2c2"/></svg>
<svg class="b" style="left:180px;top:584px" width="19" height="19" viewBox="0 0 19 19" fill="none" stroke="#666" stroke-width="1.100"><circle cx="9.400" cy="8.900" r="7.300"/><path d="M9.400 5.200v7.400M5.700 8.900h7.400" stroke-width="1.300"/></svg>
<div class="b" style="left:498.80px;top:588.30px;width:1.60px;height:1.60px;background:#9a9a9a;"></div>
<div class="b" style="left:498.80px;top:592.30px;width:1.60px;height:1.60px;background:#9a9a9a;"></div>
<div class="b" style="left:498.80px;top:596.30px;width:1.60px;height:1.60px;background:#9a9a9a;"></div>
<div class="b" style="left:514.50px;top:587.20px;width:296.50px;height:13.20px;background:#d3d3d3;"></div>
<div class="b" style="left:514.50px;top:587.20px;width:14.50px;height:13.20px;background:#fff;box-shadow:inset 0 0 0 0.7px #c6c6c6;"></div>
<svg class="b" style="left:519.500px;top:590.300px" width="5" height="7" viewBox="0 0 5 7"><path d="M4.400.300v6.400L.700 3.500z" fill="#555"/></svg>
<div class="b" style="left:529.00px;top:587.20px;width:233.80px;height:13.20px;background:#fff;box-shadow:inset 0 0 0 0.7px #c6c6c6;"></div>
<div class="b" style="left:797.40px;top:587.20px;width:13.60px;height:13.20px;background:#fff;box-shadow:inset 0 0 0 0.7px #c6c6c6;"></div>
<svg class="b" style="left:801.800px;top:590.300px" width="5" height="7" viewBox="0 0 5 7"><path d="M.6.300v6.400L4.300 3.500z" fill="#555"/></svg>
<div class="b" style="left:0.00px;top:606.30px;width:832.00px;height:21.70px;background:#f3f2f1;box-shadow:inset 0 1px 0 #dcdcdc;"></div>
<span class="t" style="left:8.80px;top:590.20px;font-size:11px;color:#444;font-weight:400;letter-spacing:-0.061px;"><i class="s"></i>Готово</span>
<svg class="b" style="left:68px;top:610px" width="15" height="13" viewBox="0 0 15 13" fill="none" stroke="#555" stroke-width="1">
<path d="M1 .800h12.500M1 3.300h12.500M1.500 3.300v8.700h4"/><path d="M3.300 5.800h2M3.300 8.300h1.500" /><circle cx="9.800" cy="8.300" r="3.700"/><circle cx="9.800" cy="8.300" r="1.500" fill="#555"/></svg>
<div class="b" style="left:536.00px;top:607.00px;width:38.40px;height:21.00px;background:#d4d4d4;"></div>
<svg class="b" style="left:547px;top:610px" width="100" height="14" viewBox="0 0 100 14" fill="none" stroke="#555" stroke-width="1">
<rect x="1.500" y="1" width="13" height="11.500"/><path d="M1.500 4.800h13M1.500 8.600h13M5.800 1v11.500M10.200 1v11.500"/>
<rect x="39.500" y="1" width="11.500" height="11.500"/><rect x="42" y="3.400" width="6.500" height="6.800"/><path d="M43.500 5.500h3.500M43.500 7.500h3.500"/>
<rect x="76.500" y="1" width="12.500" height="11.500"/><path d="M80.800 1v6.500h4.500V1" /></svg>
<div class="b" style="left:655.00px;top:616.50px;width:7.00px;height:1.00px;background:#666;"></div>
<div class="b" style="left:667.50px;top:616.50px;width:92.50px;height:1.00px;background:#a0a0a0;"></div>
<div class="b" style="left:712.00px;top:611.80px;width:5.00px;height:10.70px;background:#666;"></div>
<div class="b" style="left:764.50px;top:616.50px;width:9.00px;height:1.00px;background:#666;"></div>
<div class="b" style="left:768.50px;top:612.50px;width:1.00px;height:9.00px;background:#666;"></div>
<span class="t" style="left:786.00px;top:590.60px;font-size:11.3px;color:#444;font-weight:400;letter-spacing:-0.948px;"><i class="s"></i>100 %</span>
<div class="b" style="left:0;top:0;width:832px;height:628px;box-sizing:border-box;border:1.2px solid #217346;border-radius:8px;"></div>
<svg class="b" style="left:0;top:0;filter:drop-shadow(2px 2.5px 2.2px rgba(0,0,0,.42))" width="832" height="628" viewBox="0 0 832 628" fill="none">
<rect x="238.300" y="155.200" width="375.800" height="33.500" rx="7.500" stroke="#0a0a0a" stroke-width="3.900"/>
<path d="M240.800 186.500L146 366.500" stroke="#0a0a0a" stroke-width="4.300"/>
<path d="M146.500 357.200L145.400 367.800 154.400 362.600" stroke="#0a0a0a" stroke-width="4.400" stroke-linejoin="miter" stroke-linecap="round"/>
</svg>
</div>
</body></html>
